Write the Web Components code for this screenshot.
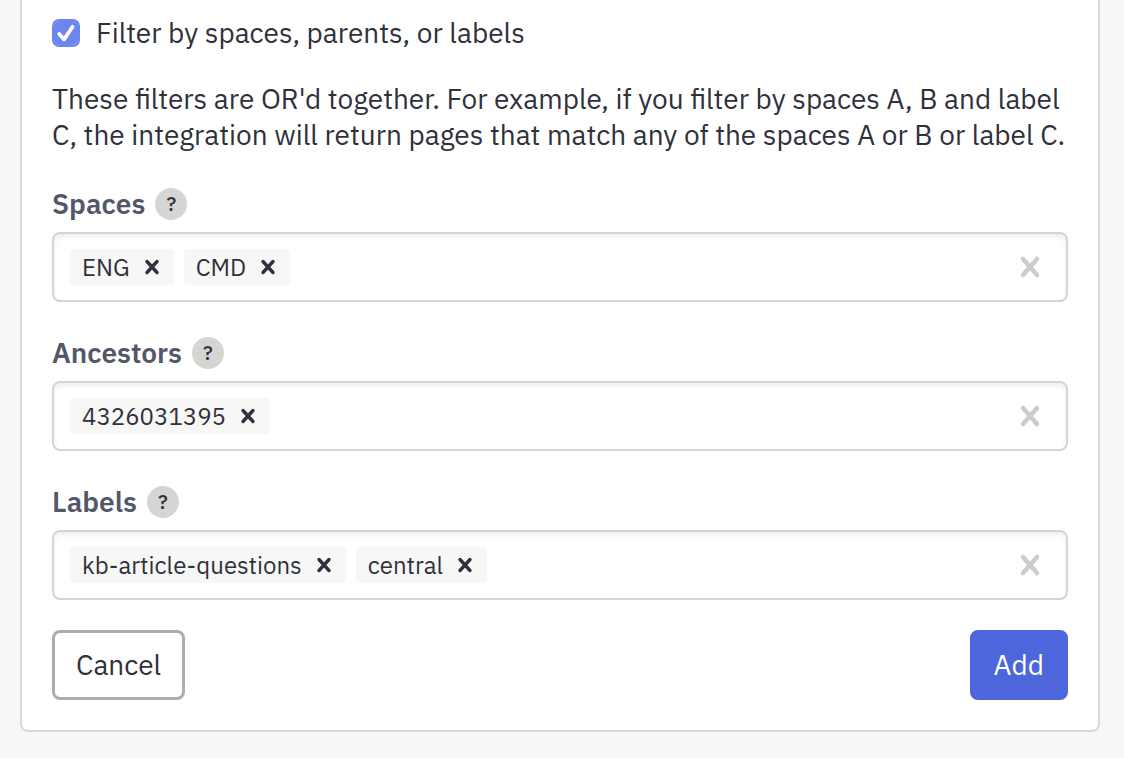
<!DOCTYPE html>
<html lang="en">
<head>
<meta charset="utf-8">
<title>Filters</title>
<style>
  html { background: #f7f7f5; }
  body {
    margin: 0;
    font-family: "IBM Plex Sans", "Noto Sans", sans-serif;
    font-size: 28px;
    line-height: 36px;
    color: #2f313d;
  }
</style>
</head>
<body>
<filter-form>
  <filter-toggle>Filter by spaces, parents, or labels</filter-toggle>
  <filter-note>These filters are OR'd together. For example, if you filter by spaces A, B and label C, the integration will return pages that match any of the spaces A or B or label C.</filter-note>
  <tag-field label="Spaces"><tag-chip>ENG</tag-chip><tag-chip>CMD</tag-chip></tag-field>
  <tag-field label="Ancestors"><tag-chip>4326031395</tag-chip></tag-field>
  <tag-field label="Labels"><tag-chip>kb-article-questions</tag-chip><tag-chip>central</tag-chip></tag-field>
  <action-button slot="actions" variant="secondary">Cancel</action-button>
  <action-button slot="actions" variant="primary">Add</action-button>
</filter-form>

<script>
class BaseElement extends HTMLElement {
  constructor() {
    super();
    const template = document.createElement('template');
    template.innerHTML = '<style>*{box-sizing:border-box}button,input{font:inherit;color:inherit;margin:0}</style>' + this.render();
    this.attachShadow({ mode: 'open' }).append(template.content.cloneNode(true));
  }
}

customElements.define('filter-form', class extends BaseElement {
  render() {
    return `<style>
      :host { display: block; padding: 0 24px 26px 20px; }
      form {
        display: flex; flex-direction: column;
        padding: 15px 30px 30px;
        background: #fff;
        border: 2px solid #dadad8; border-top: 0;
        border-radius: 0 0 8px 8px;
      }
      footer { display: flex; justify-content: space-between; margin-top: 30px; }
    </style>
    <form><slot></slot><footer><slot name="actions"></slot></footer></form>`;
  }
});

customElements.define('filter-toggle', class extends BaseElement {
  render() {
    return `<style>
      :host { display: block; }
      label { display: flex; align-items: center; gap: 16px; }
      .box { display: grid; flex: none; width: 28px; height: 28px; }
      .box > * { grid-area: 1 / 1; }
      input { appearance: none; width: 28px; height: 28px; border-radius: 7px; background: #6c86ef; }
      svg { pointer-events: none; visibility: hidden; }
      input:checked + svg { visibility: visible; }
    </style>
    <label><span class="box"><input type="checkbox" checked>
      <svg width="28" height="28" viewBox="0 0 28 28" fill="none" stroke-linecap="round" stroke-linejoin="round" aria-hidden="true">
        <path d="M2 7a5 5 0 0 1 5-5M21 2a5 5 0 0 1 5 5M26 21a5 5 0 0 1-5 5M7 26a5 5 0 0 1-5-5" stroke="#8ba0f3" stroke-width=".7"/>
        <path d="M7.2 14.9 12.1 20.4 20.6 7.7" stroke="#fff" stroke-width="3.7"/>
      </svg></span><span><slot></slot></span></label>`;
  }
});

customElements.define('filter-note', class extends BaseElement {
  render() {
    return `<style>:host { display: block; margin-top: 30px; } p { margin: 0; }</style><p><slot></slot></p>`;
  }
});

customElements.define('tag-field', class extends BaseElement {
  render() {
    return `<style>
      :host { display: block; margin-top: 35px; }
      .heading { display: flex; align-items: center; gap: 10px; height: 32px; margin-bottom: 12px; }
      label { font-weight: 600; color: #525869; }
      .help {
        width: 32px; height: 32px; padding: 0; border: 0; border-radius: 50%;
        background: #d5d5d3; font-size: 20px; line-height: 32px; font-weight: 500;
      }
      .control {
        display: flex; align-items: center; gap: 10px;
        min-height: 70px; padding: 0 24px 0 16px;
        border: 2px solid #d5d5d5; border-radius: 8px;
        background: #fff; box-shadow: inset 0 3px 5px #00000012;
      }
      input { flex: 1; min-width: 0; height: 36px; padding: 0; border: 0; outline: 0; background: none; }
      .clear { display: flex; padding: 0; border: 0; background: none; color: #ccc; }
    </style>
    <div class="heading"><label for="entry"></label><button type="button" class="help">?</button></div>
    <div class="control"><slot></slot><input id="entry" type="text">
      <button type="button" class="clear" aria-label="Clear all"><svg width="24" height="24" viewBox="0 0 24 24" stroke="currentColor" stroke-width="4.5" stroke-linecap="round"><path d="M5 4 19 20M19 4 5 20"/></svg></button>
    </div>`;
  }
  connectedCallback() {
    this.shadowRoot.querySelector('label').textContent = this.getAttribute('label');
  }
});

customElements.define('tag-chip', class extends BaseElement {
  render() {
    return `<style>
      :host {
        display: flex; align-items: center; gap: 14px;
        height: 36px; padding: 0 14px 0 12px; border-radius: 4px;
        background: #f7f7f6; font-size: 24px; white-space: nowrap;
      }
      button { display: flex; padding: 0; border: 0; background: none; }
    </style>
    <span><slot></slot></span>
    <button type="button" aria-label="Remove"><svg width="16" height="16" viewBox="0 0 16 16" stroke="currentColor" stroke-width="3.4" stroke-linecap="round"><path d="M3 2.5 13 13.5M13 2.5 3 13.5"/></svg></button>`;
  }
});

customElements.define('action-button', class extends BaseElement {
  render() {
    return `<style>
      :host { display: block; }
      button {
        height: 70px; padding: 0 21px; border: 3px solid #adada9; border-radius: 8px;
        background: #fff;
      }
      :host([variant="primary"]) button { border-color: #4d66db; background: #4d66db; color: #fff; }
    </style>
    <button type="button"><slot></slot></button>`;
  }
});
</script>
</body>
</html>
